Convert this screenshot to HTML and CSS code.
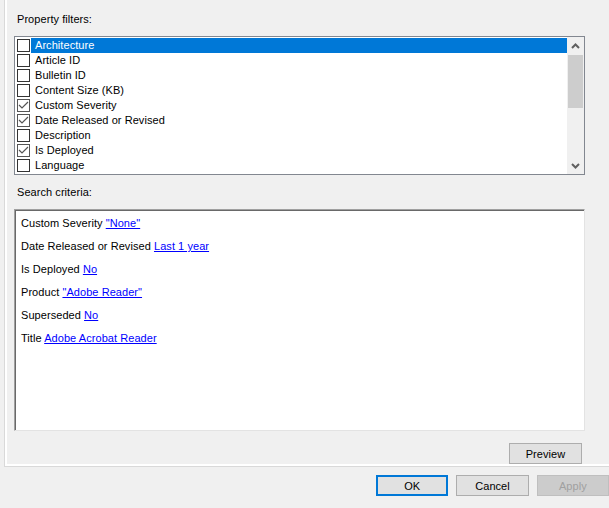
FILE: index.html
```html
<!DOCTYPE html>
<html>
<head>
  <meta name="viewport" content="width=device-width, initial-scale=1">
  <link rel="stylesheet" href="styles.css">
</head>
<body>
  <div class="tab-page">
    <div class="field-label first">Property filters:</div>

    <div class="listbox">
      <div class="list-items">
        <div class="row"><span class="check"></span><span class="text selected">Architecture</span></div>
        <div class="row"><span class="check"></span><span class="text">Article ID</span></div>
        <div class="row"><span class="check"></span><span class="text">Bulletin ID</span></div>
        <div class="row"><span class="check"></span><span class="text">Content Size (KB)</span></div>
        <div class="row"><span class="check on"><svg width="11" height="11" viewBox="0 0 11 11"><polyline points="1,5 4,8 10,2" fill="none" stroke="#555" stroke-width="1.2"/></svg></span><span class="text">Custom Severity</span></div>
        <div class="row"><span class="check on"><svg width="11" height="11" viewBox="0 0 11 11"><polyline points="1,5 4,8 10,2" fill="none" stroke="#555" stroke-width="1.2"/></svg></span><span class="text">Date Released or Revised</span></div>
        <div class="row"><span class="check"></span><span class="text">Description</span></div>
        <div class="row"><span class="check on"><svg width="11" height="11" viewBox="0 0 11 11"><polyline points="1,5 4,8 10,2" fill="none" stroke="#555" stroke-width="1.2"/></svg></span><span class="text">Is Deployed</span></div>
        <div class="row"><span class="check"></span><span class="text">Language</span></div>
      </div>
      <div class="scrollbar">
        <div class="arrow"><svg width="9" height="6" viewBox="0 0 9 6"><polyline points="1,5 4.5,1.5 8,5" fill="none" stroke="#606060" stroke-width="2"/></svg></div>
        <div class="thumb"></div>
        <div class="track"></div>
        <div class="arrow"><svg width="9" height="6" viewBox="0 0 9 6"><polyline points="1,1 4.5,4.5 8,1" fill="none" stroke="#606060" stroke-width="2"/></svg></div>
      </div>
    </div>

    <div class="field-label second">Search criteria:</div>

    <div class="criteria">
      <div class="crit">Custom Severity <a href="#">"None"</a></div>
      <div class="crit">Date Released or Revised <a href="#">Last 1 year</a></div>
      <div class="crit">Is Deployed <a href="#">No</a></div>
      <div class="crit">Product <a href="#">"Adobe Reader"</a></div>
      <div class="crit">Superseded <a href="#">No</a></div>
      <div class="crit">Title <a href="#">Adobe Acrobat Reader</a></div>
    </div>

    <div class="preview-row">
      <button class="btn">Preview</button>
    </div>
  </div>

  <div class="dialog-buttons">
    <button class="btn default">OK</button>
    <button class="btn">Cancel</button>
    <button class="btn" disabled>Apply</button>
  </div>
</body>
</html>
```

FILE: styles.css
```css
html, body {
  margin: 0;
  padding: 0;
}
body {
  width: 609px;
  height: 508px;
  overflow: hidden;
  background: #f0f0f0;
  font-family: "Liberation Sans", Arial, sans-serif;
  font-size: 11px;
  letter-spacing: 0.06px;
  color: #000;
}
.tab-page {
  margin-left: 4px;
  width: 620px;
  height: 466px;
  border-left: 1px solid #d9d9d9;
  border-bottom: 1px solid #d9d9d9;
  box-shadow: inset 2px -2px 0 #fff;
  padding-left: 9px;
  box-sizing: content-box;
}
.field-label {
  height: 15px;
  line-height: 15px;
  padding-left: 3px;
}
.field-label.first {
  padding-top: 12px;
  margin-bottom: 9px;
}
.field-label.second {
  margin-top: 10px;
  margin-bottom: 9px;
}

/* checked list box */
.listbox {
  display: flex;
  width: 571px;
  height: 139px;
  box-sizing: border-box;
  border: 1px solid #828790;
  background: #fff;
}
.list-items {
  flex: 1;
  padding-top: 1px;
}
.row {
  display: flex;
  align-items: center;
  height: 15px;
}
.check {
  width: 13px;
  height: 13px;
  box-sizing: border-box;
  border: 1px solid #333;
  margin-left: 2px;
  background: #fff;
  display: flex;
  align-items: center;
  justify-content: center;
}
.check.on {
  border-color: #555;
}
.text {
  flex: 1;
  height: 15px;
  line-height: 15px;
  margin-left: 1px;
  padding-left: 4px;
}
.text.selected {
  background: #0078d7;
  color: #fff;
}
.scrollbar {
  width: 17px;
  background: #f0f0f0;
  display: flex;
  flex-direction: column;
}
.arrow {
  height: 17px;
  display: flex;
  align-items: center;
  justify-content: center;
}
.thumb {
  height: 53px;
  margin: 1px 1px 0;
  background: #cdcdcd;
}
.track {
  flex: 1;
}

/* search criteria */
.criteria {
  width: 571px;
  height: 222px;
  box-sizing: border-box;
  background: #fff;
  border-top: 1px solid #a0a0a0;
  border-left: 1px solid #a0a0a0;
  border-right: 1px solid #e3e3e3;
  border-bottom: 1px solid #e3e3e3;
  box-shadow: inset 1px 1px 0 #696969;
  padding: 6px 0 0 6px;
}
.crit {
  height: 15px;
  line-height: 15px;
  margin-bottom: 8px;
}
.crit a {
  color: #0000ff;
  text-decoration: underline;
}

.preview-row {
  display: flex;
  justify-content: flex-end;
  width: 568px;
  margin-top: 12px;
}

/* buttons */
.btn {
  width: 73px;
  height: 21px;
  box-sizing: border-box;
  border: 1px solid #adadad;
  background: #e1e1e1;
  font-family: "Liberation Sans", Arial, sans-serif;
  font-size: 11px;
  letter-spacing: 0.06px;
  color: #000;
  padding: 0;
  margin: 0;
}
.btn.default {
  border: 2px solid #0078d7;
}
.btn:disabled {
  background: #cccccc;
  border-color: #bfbfbf;
  color: #a0a0a0;
}
.dialog-buttons {
  display: flex;
  gap: 8px;
  margin-top: 8px;
  padding-left: 376px;
}
```
